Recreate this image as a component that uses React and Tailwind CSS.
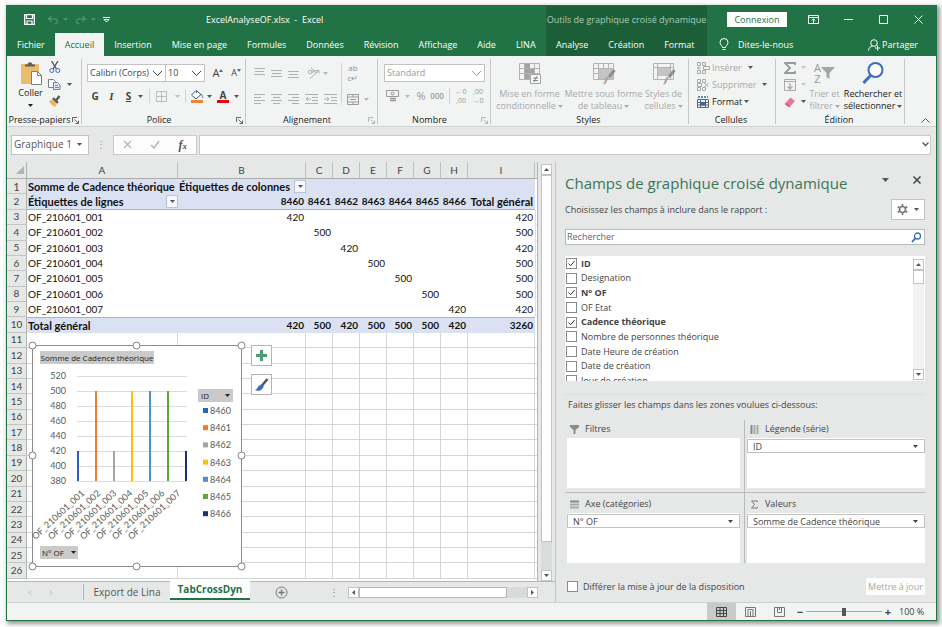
import React, { useState } from "react";

const ribbonTabs = [
  "Fichier",
  "Accueil",
  "Insertion",
  "Mise en page",
  "Formules",
  "Données",
  "Révision",
  "Affichage",
  "Aide",
  "LINA",
];
const contextTabs = ["Analyse", "Création", "Format"];

const columns = ["A", "B", "C", "D", "E", "F", "G", "H", "I"];
const ids = ["8460", "8461", "8462", "8463", "8464", "8465", "8466"];

const orders = [
  { name: "OF_210601_001", value: 420, color: "#2a5fc0" },
  { name: "OF_210601_002", value: 500, color: "#ed7d31" },
  { name: "OF_210601_003", value: 420, color: "#a5a5a5" },
  { name: "OF_210601_004", value: 500, color: "#ffc000" },
  { name: "OF_210601_005", value: 500, color: "#4a90d0" },
  { name: "OF_210601_006", value: 500, color: "#5fa832" },
  { name: "OF_210601_007", value: 420, color: "#1b2f73" },
];

const emptyRows = [11, 12, 13, 14, 15, 16, 17, 18, 19, 20, 21, 22, 23, 24, 25, 26];

const initialFields = [
  { label: "ID", checked: true },
  { label: "Designation", checked: false },
  { label: "N° OF", checked: true },
  { label: "OF Etat", checked: false },
  { label: "Cadence théorique", checked: true },
  { label: "Nombre de personnes théorique", checked: false },
  { label: "Date Heure de création", checked: false },
  { label: "Date de création", checked: false },
  { label: "Jour de création", checked: false },
];

/* ---------- small shared pieces ---------- */

const Caret = ({ className = "text-[#555]" }) => (
  <svg width="5" height="3" viewBox="0 0 5 3" className={`shrink-0 ${className}`} aria-hidden="true">
    <path d="M0 0h5L2.5 3z" fill="currentColor" />
  </svg>
);

const Icon = ({ w = 14, h = 14, className = "", children }) => (
  <svg
    width={w}
    height={h}
    viewBox={`0 0 ${w} ${h}`}
    fill="none"
    stroke="currentColor"
    className={`shrink-0 ${className}`}
    aria-hidden="true"
  >
    {children}
  </svg>
);

const IconButton = ({ label, className = "", children }) => (
  <button
    type="button"
    aria-label={label}
    className={`flex shrink-0 items-center justify-center ${className}`}
  >
    {children}
  </button>
);

const Select = ({ label, options, className = "", chevron = false }) => (
  <span className={`relative flex items-center border border-[#c3c3c3] bg-white ${className}`}>
    <select
      aria-label={label}
      className="h-full w-full appearance-none bg-transparent pl-[2px] outline-none"
    >
      {options.map((o) => (
        <option key={o}>{o}</option>
      ))}
    </select>
    <span className="pointer-events-none absolute right-[2px]">
      {chevron ? (
        <Icon w={11} h={7}>
          <path d="M1 1l4.5 4.5L10 1" />
        </Icon>
      ) : (
        <Caret className="mr-[4px]" />
      )}
    </span>
  </span>
);

const Tick = ({ checked, onChange, id }) => (
  <span className="relative flex h-[11px] w-[11px] shrink-0">
    <input
      id={id}
      type="checkbox"
      checked={checked}
      onChange={onChange}
      className="h-[11px] w-[11px] appearance-none border border-[#8a8a8a] bg-white"
    />
    {checked && (
      <Icon w={11} h={11} className="pointer-events-none absolute left-0 top-0 text-[#333]">
        <path d="M2.5 5.5l2.2 2.2L8.6 3" />
      </Icon>
    )}
  </span>
);

const Launcher = ({ muted }) => (
  <Icon w={7} h={7} className={muted ? "text-[#b5b5b5]" : "text-[#666]"}>
    <path d="M.5 5V.5H5M2.5 2.5l4 4M6.5 3.5v3h-3" />
  </Icon>
);

const Group = ({ title, launcher, muted, className, children }) => (
  <section className={`mb-[2px] mt-[3px] flex shrink-0 flex-col border-r border-[#c6c8c7] ${className}`}>
    <div className="flex min-h-0 flex-1">{children}</div>
    <div className={`flex h-2 items-center pr-[2px] ${launcher ? "" : "justify-center"}`}>
      <h2
        className={`whitespace-nowrap text-center text-[9px] leading-[8px] text-[#222] ${
          launcher ? "flex-1" : ""
        }`}
      >
        {title}
      </h2>
      {launcher && (
        <button type="button" aria-label={`Options ${title}`}>
          <Launcher muted={muted} />
        </button>
      )}
    </div>
  </section>
);

const Separator = ({ className = "h-[14px]" }) => (
  <span className={`w-px shrink-0 bg-[#d2d4d3] ${className}`} />
);

/* ---------- title bar and tabs ---------- */

const TabButton = ({ label, active, onClick }) => (
  <button
    type="button"
    onClick={onClick}
    className={`h-full whitespace-nowrap px-[10px] ${
      active ? "bg-[#f1f4f2] text-[#217346]" : "text-white"
    }`}
  >
    {label}
  </button>
);

const Header = () => {
  const [active, setActive] = useState("Accueil");

  return (
    <header className="flex h-[50px] shrink-0 bg-[#217346] text-[9px] text-white">
      <div className="flex min-w-0 flex-1 flex-col">
        <div className="flex h-[27px] items-center pl-4">
          <IconButton label="Enregistrer" className="w-3">
            <Icon w={11} h={11}>
              <path d="M.7.7h9.6v9.6H.7z" strokeWidth="1.3" />
              <path d="M2.5 1v3.5h6V1M3 10V7h5v3" strokeWidth="1.2" />
            </Icon>
          </IconButton>
          <IconButton label="Annuler" className="ml-3 gap-1 text-[#4f9270]">
            <Icon w={12} h={10}>
              <path d="M4.5 1L1.5 3.8l3 2.7M2 3.8h5.5c4 0 4 5 0 5" strokeWidth="1.3" />
            </Icon>
            <Caret className="text-[#4f9270]" />
          </IconButton>
          <IconButton label="Rétablir" className="ml-[7px] gap-1 text-[#4f9270]">
            <Icon w={12} h={10}>
              <path d="M7.5 1l3 2.8-3 2.7M10 3.8H4.5c-4 0-4 5 0 5" strokeWidth="1.3" />
            </Icon>
            <Caret className="text-[#4f9270]" />
          </IconButton>
          <IconButton label="Personnaliser la barre" className="ml-[7px]">
            <Icon w={7} h={6}>
              <path d="M0 .5h7M1 2.5h5L3.5 5z" />
            </Icon>
          </IconButton>
          <h1 className="min-w-0 flex-1 whitespace-pre pl-24">
            ExcelAnalyseOF.xlsx  -  Excel
          </h1>
        </div>
        <nav className="flex h-[23px] font-medium">
          {ribbonTabs.map((t) => (
            <TabButton key={t} label={t} active={t === active} onClick={() => setActive(t)} />
          ))}
        </nav>
      </div>

      <div className="flex w-[161px] shrink-0 flex-col bg-[#1b5e38]">
        <p className="flex h-[27px] items-center justify-center whitespace-nowrap text-[#a9cdb9]">
          Outils de graphique croisé dynamique
        </p>
        <nav className="flex h-[23px] font-medium">
          {contextTabs.map((t) => (
            <TabButton key={t} label={t} active={t === active} onClick={() => setActive(t)} />
          ))}
        </nav>
      </div>

      <div className="flex w-[229px] shrink-0 flex-col">
        <div className="flex h-[27px] items-center">
          <button type="button" className="ml-5 h-[15px] w-[60px] bg-white leading-[15px] text-[#217346]">
            Connexion
          </button>
          <IconButton label="Options du ruban" className="ml-5 w-3">
            <Icon w={11} h={9}>
              <path d="M.5.5h10v8H.5zM.5 2.5h10M5.5 8V4M3.8 5.5l1.7-1.7 1.7 1.7" />
            </Icon>
          </IconButton>
          <IconButton label="Réduire" className="ml-[23px] w-3">
            <Icon w={9} h={9}>
              <path d="M0 4.5h9" />
            </Icon>
          </IconButton>
          <IconButton label="Agrandir" className="ml-[23px] w-3">
            <Icon w={9} h={9}>
              <path d="M.5.5h8v8h-8z" />
            </Icon>
          </IconButton>
          <IconButton label="Fermer" className="ml-[23px] w-3">
            <Icon w={9} h={9}>
              <path d="M.5.5l8 8M8.5.5l-8 8" />
            </Icon>
          </IconButton>
        </div>
        <div className="flex h-[23px] items-center font-medium">
          <button type="button" className="ml-3 flex items-center gap-[9px] whitespace-nowrap">
            <Icon w={10} h={13}>
              <path d="M3.5 9.5C3.5 8 1 7 1 4.5a4 4 0 018 0C9 7 6.5 8 6.5 9.5zM3.5 11.5h3" />
            </Icon>
            Dites-le-nous
          </button>
          <button type="button" className="ml-auto mr-[18px] flex items-center gap-[2px] whitespace-nowrap">
            <Icon w={12} h={12}>
              <circle cx="6" cy="4" r="3.3" />
              <path d="M.5 11.5c.5-3 2-4 4-4.5M9.500 6.500v5M7 9h5" />
            </Icon>
            Partager
          </button>
        </div>
      </div>
    </header>
  );
};

/* ---------- ribbon ---------- */

const Lines = ({ rows }) => (
  <Icon w={11} h={10}>
    {rows.map(([x, y, w]) => (
      <path key={y} d={`M${x} ${y}.5h${w}`} />
    ))}
  </Icon>
);

const TableGlyph = ({ children }) => (
  <Icon w={24} h={24} className="text-[#b3b3b3]">
    <path d="M1.5 2.5h20v16h-20zM1.5 7.5h20M1.5 12.5h20M6.5 2.5v16M11.5 2.5v16M16.5 2.5v16" />
    {children}
  </Icon>
);

const BigButton = ({ icon, lines, muted, className }) => (
  <button
    type="button"
    className={`flex shrink-0 flex-col items-center pt-[2px] leading-[12px] ${
      muted ? "text-[#a9a9a9]" : "text-[#222]"
    } ${className}`}
  >
    {icon}
    <span className="mt-[3px] whitespace-nowrap">{lines[0]}</span>
    <span className="flex items-center gap-[2px] whitespace-nowrap">
      {lines[1]}
      <Caret className={muted ? "text-[#a9a9a9]" : "text-[#555]"} />
    </span>
  </button>
);

const CellCommand = ({ icon, label, muted }) => (
  <button
    type="button"
    className={`flex h-[17px] items-center gap-[2px] whitespace-nowrap ${
      muted ? "text-[#a9a9a9]" : "text-[#222]"
    }`}
  >
    {icon}
    {label}
    <Caret className={muted ? "ml-1 text-[#555]" : "text-[#555]"} />
  </button>
);

const Brush = ({ x = 12, y = 9 }) => (
  <g transform={`translate(${x} ${y})`}>
    <path d="M10.5 0L5 7" stroke="#8f8f8f" strokeWidth="3" />
    <path d="M5.5 6L2 13c-1 2-3 1-3 1 2-1 1-5 4-7z" fill="#a8a8a8" stroke="none" />
  </g>
);

const Ribbon = () => (
  <div className="flex h-[71px] shrink-0 border-b border-[#cfd1d0] bg-[#f1f4f2] text-[9px] text-[#444]">
    <Group title="Presse-papiers" launcher className="w-[75px]">
      <button type="button" className="ml-2 flex w-[31px] flex-col items-center pt-[2px] text-[#222]">
        <Icon w={24} h={25}>
          <path d="M2 3h18v20H2z" fill="#e9bd6b" stroke="none" />
          <path d="M6 5.5V3.5h2.500C9 .5 13 .5 13.5 3.500H16v2z" fill="#5d5d5d" stroke="none" />
          <path d="M12.5 10.5h6l4 4v9h-10z" fill="#fff" stroke="#7c7c7c" />
          <path d="M18.5 10.5v4h4" stroke="#7c7c7c" />
        </Icon>
        <span className="leading-[14px]">Coller</span>
        <Caret className="mt-1" />
      </button>
      <div className="ml-[2px] flex flex-col gap-1 pt-[2px]">
        <IconButton label="Couper" className="w-[13px]">
          <Icon w={12} h={13}>
            <path d="M2.5 0l5 8M9 0L4 8" stroke="#555" strokeWidth="1.4" />
            <circle cx="2.8" cy="9.5" r="2" stroke="#3d6fc0" />
            <circle cx="8.8" cy="9.5" r="2" stroke="#3d6fc0" />
          </Icon>
        </IconButton>
        <IconButton label="Copier" className="gap-[6px]">
          <Icon w={13} h={13}>
            <path d="M.5 1.5h5l2 2v6h-7z" fill="#fff" stroke="#7a7f8c" />
            <path d="M5.5 4.5h4l2.500 2.500v4.500H5.500z" fill="#dfe6f5" stroke="#7a7f8c" />
            <path d="M7 7.5h3M7 9.5h4" stroke="#6c8ccc" />
          </Icon>
          <Caret />
        </IconButton>
        <IconButton label="Reproduire la mise en forme" className="w-[13px]">
          <Icon w={13} h={12}>
            <path d="M1 6l4-2 4 5-2 3C5 11 2 9 1 6z" fill="#e9b768" stroke="none" />
            <path d="M5 3l5 5M8 5.5L11.5 1" stroke="#5a5a5a" strokeWidth="2.4" />
          </Icon>
        </IconButton>
      </div>
    </Group>

    <Group title="Police" launcher className="w-[164px]">
      <div className="w-full pl-[5px] pt-[5px]">
        <div className="flex items-center">
          <Select
            label="Police"
            options={["Calibri (Corps)"]}
            chevron
            className="h-[18px] w-[79px]"
          />
          <Select
            label="Taille"
            options={["10", "11", "12"]}
            chevron
            className="h-[18px] w-[39px] border-l-0"
          />
          <IconButton label="Agrandir la police" className="ml-1 w-[18px] text-[11px]">
            A
            <Icon w={4} h={8}>
              <path d="M0 3l2-3 2 3z" fill="#3d6fc0" stroke="none" />
            </Icon>
          </IconButton>
          <IconButton label="Réduire la police" className="w-[18px]">
            A
            <Icon w={4} h={8}>
              <path d="M0 0h4L2 3z" fill="#3d6fc0" stroke="none" />
            </Icon>
          </IconButton>
        </div>
        <div className="mt-1 flex h-[20px] items-center text-[10px]">
          <button type="button" className="w-[16px] font-bold">G</button>
          <button type="button" className="w-[17px] font-['Liberation_Serif',serif] text-[11px] font-bold italic">I</button>
          <button type="button" className="w-[17px] font-bold underline">S</button>
          <Caret className="ml-[1px] text-[#555]" />
          <Separator className="ml-[6px] h-[14px]" />
          <IconButton label="Bordures" className="ml-[6px] gap-2 text-[#bdbdbd]">
            <Icon w={11} h={11}>
              <path d="M.5.5h10v10H.5zM5.5.5v10M.5 5.5h10" />
            </Icon>
            <Caret className="text-[#bdbdbd]" />
          </IconButton>
          <Separator className="ml-[5px] h-[14px]" />
          <IconButton label="Couleur de remplissage" className="ml-[4px] gap-[3px]">
            <Icon w={14} h={13}>
              <path d="M6 .5L1.5 5 6 9l5-4.500z" fill="#fff" stroke="#555" />
              <path d="M6.5 3V0M11 4c2 2 2 4 1 4" stroke="#3d6fc0" />
              <path d="M1 10h12v3H1z" fill="#e8833a" stroke="none" />
            </Icon>
            <Caret />
          </IconButton>
          <IconButton label="Couleur de police" className="ml-[5px] gap-[5px]">
            <span className="flex w-3 flex-col items-center border-b-[3px] border-[#e8000f] font-bold leading-[10px]">
              A
            </span>
            <Caret />
          </IconButton>
        </div>
      </div>
    </Group>

    <Group title="Alignement" launcher muted className="w-[132px] text-[#b0b0b0]">
      <div className="flex flex-col gap-[6px] pl-2 pt-1">
        <div className="flex h-[20px] items-center gap-[6px]">
          <IconButton label="Aligner en haut">
            <Lines rows={[[0, 0, 11], [1, 3, 9], [0, 6, 11]]} />
          </IconButton>
          <IconButton label="Aligner au centre">
            <Lines rows={[[0, 2, 11], [1, 5, 9], [0, 8, 11]]} />
          </IconButton>
          <IconButton label="Aligner en bas">
            <Lines rows={[[0, 3, 11], [1, 6, 9], [0, 9, 11]]} />
          </IconButton>
          <IconButton label="Orientation" className="ml-[2px] gap-[3px]">
            <Icon w={13} h={12}>
              <circle cx="3" cy="5" r="1.8" />
              <path d="M4.5 3.5L6 6M4 .5l4 5M6.5 5c1-3 4-1 2 1M3 11.5L12 3.5M9 3.5h3v3" />
            </Icon>
            <Caret className="text-[#b8b8b8]" />
          </IconButton>
        </div>
        <div className="flex h-[20px] items-center gap-[6px]">
          <IconButton label="Aligner à gauche">
            <Lines rows={[[0, 0, 11], [0, 3, 7], [0, 6, 11], [0, 9, 7]]} />
          </IconButton>
          <IconButton label="Centrer">
            <Lines rows={[[0, 0, 11], [2, 3, 7], [0, 6, 11], [2, 9, 7]]} />
          </IconButton>
          <IconButton label="Aligner à droite">
            <Lines rows={[[0, 0, 11], [4, 3, 7], [0, 6, 11], [4, 9, 7]]} />
          </IconButton>
          <IconButton label="Diminuer le retrait">
            <Icon w={13} h={11}>
              <path d="M0 .5h13M7 3.5h6M7 6.5h6M0 9.5h13M6 5H1M3 3L1 5l2 2" />
            </Icon>
          </IconButton>
          <IconButton label="Augmenter le retrait">
            <Icon w={13} h={11}>
              <path d="M0 .5h13M7 3.5h6M7 6.5h6M0 9.5h13M0 5h5M3 3l2 2-2 2" />
            </Icon>
          </IconButton>
        </div>
      </div>
      <Separator className="ml-[4px] mt-1 h-[42px]" />
      <div className="flex flex-col gap-[6px] pl-[5px] pt-1">
        <IconButton label="Renvoyer à la ligne" className="h-[20px] w-3 flex-col text-[8px] leading-[10px] text-[#8f8f8f]">
          <span>ab</span>
          <span>c↵</span>
        </IconButton>
        <IconButton label="Fusionner et centrer" className="h-[20px] gap-[5px] text-[#9d9d9d]">
          <Icon w={12} h={11}>
            <path d="M.5.5h11v10H.5zM.5 3h11M.5 8h11M6 .5V3M6 8v2.500M3 5.500h6" />
          </Icon>
          <Caret className="text-[#b8b8b8]" />
        </IconButton>
      </div>
    </Group>

    <Group title="Nombre" launcher muted className="w-[113px] text-[#9a9a9a]">
      <div className="pl-[6px] pt-[5px]">
        <Select label="Format de nombre" options={["Standard"]} chevron className="h-[18px] w-[101px]" />
        <div className="mt-1 flex h-[20px] items-center">
          <IconButton label="Format comptable" className="ml-[2px] gap-[5px]">
            <Icon w={14} h={12}>
              <path d="M.5.5h12v6H.5z" />
              <circle cx="6.5" cy="3.5" r="1.5" />
              <path d="M4 8.5h6M4 10.5h6" strokeWidth="1.5" />
            </Icon>
            <Caret className="text-[#b8b8b8]" />
          </IconButton>
          <button type="button" className="ml-[5px] w-[12px] text-[11px]">%</button>
          <button type="button" className="ml-[2px] w-[16px] text-[8px] font-semibold">000</button>
          <Separator className="ml-[4px] h-[16px]" />
          <IconButton label="Ajouter une décimale" className="ml-[5px] w-3 flex-col text-[7px] leading-[9px]">
            <span>←0</span>
            <span>,00</span>
          </IconButton>
          <IconButton label="Réduire les décimales" className="ml-[5px] w-3 flex-col text-[7px] leading-[9px]">
            <span>,00</span>
            <span>→0</span>
          </IconButton>
        </div>
      </div>
    </Group>

    <Group title="Styles" className="w-[198px]">
      <BigButton
        muted
        className="ml-1 w-[69px]"
        lines={["Mise en forme", "conditionnelle"]}
        icon={
          <TableGlyph>
            <path d="M7 3h5v4H7zM7 8h9v4H7zM7 13h4v5H7z" fill="#a2a2a2" stroke="none" />
            <path d="M12.5 13.5h10v9h-10z" fill="#f7f7f7" stroke="#a2a2a2" />
            <path d="M15 17h5M15 19.5h5M19 15l-3 6" stroke="#888" />
          </TableGlyph>
        }
      />
      <BigButton
        muted
        className="w-[79px]"
        lines={["Mettre sous forme", "de tableau"]}
        icon={
          <TableGlyph>
            <path d="M7 8h14v10H7z" fill="#c4c4c4" stroke="none" />
            <Brush />
          </TableGlyph>
        }
      />
      <BigButton
        muted
        className="w-[41px]"
        lines={["Styles de", "cellules"]}
        icon={
          <Icon w={24} h={24} className="text-[#b3b3b3]">
            <path d="M1.5 2.5h20v16h-20zM1.5 6.5h20M5.5 2.5v16M18.5 2.5v16" />
            <path d="M6 7h12v8H6z" fill="#c4c4c4" stroke="none" />
            <Brush />
          </Icon>
        }
      />
    </Group>

    <Group title="Cellules" className="w-[87px]">
      <div className="pl-2">
        <CellCommand
          muted
          label="Insérer"
          icon={
            <Icon w={13} h={12}>
              <path d="M.5.5h3v3h-3zM5.5.5h3v3h-3zM.5 8.5h3v3h-3zM5.5 8.5h3v3h-3zM6.5 4.5h6v3h-6zM4 6H0M2 4.5L.5 6 2 7.5" />
            </Icon>
          }
        />
        <CellCommand
          muted
          label="Supprimer"
          icon={
            <Icon w={13} h={12}>
              <path d="M.5.5h3v3h-3zM5.5.5h3v3h-3zM.5 8.5h3v3h-3zM5.5 8.5h3v3h-3zM.5 4.5h4v3h-4zM7.5 4l4 4M11.5 4l-4 4" />
            </Icon>
          }
        />
        <CellCommand
          label="Format"
          icon={
            <Icon w={13} h={12} className="text-[#666]">
              <path d="M.5 3.5h11v8H.5zM.5 6.5h11M.5 9h11M3.5 3.5v8M8.5 3.5v8" />
              <path d="M4 6.5h4V9H4z" fill="#2f63b5" stroke="#2f63b5" />
              <path d="M1 1h10" stroke="#2f63b5" strokeWidth="1.5" strokeDasharray="2 1" />
            </Icon>
          }
        />
      </div>
    </Group>

    <Group title="Édition" className="w-[129px]">
      <div className="flex w-[30px] flex-col pl-2">
        <IconButton label="Somme" className="h-[17px] justify-start gap-[5px] text-[#999]">
          <Icon w={12} h={12}>
            <path d="M11 3V1H1l5 5-5 5h10V9" strokeWidth="1.8" />
          </Icon>
          <Caret className="text-[#c4c4c4]" />
        </IconButton>
        <IconButton label="Remplissage" className="h-[17px] justify-start gap-[5px] text-[#aaa]">
          <Icon w={12} h={12}>
            <path d="M.5.5h11v11H.5zM.5 2.5h11" />
            <path d="M6 4v6M3.5 7.5L6 10l2.500-2.500" strokeWidth="1.4" />
          </Icon>
          <Caret className="text-[#c4c4c4]" />
        </IconButton>
        <IconButton label="Effacer" className="h-[17px] justify-start gap-[5px]">
          <Icon w={12} h={12}>
            <path d="M6.5 1.5L11 5 6 10.5 1.5 7z" fill="#e5799b" stroke="none" />
            <path d="M1.2 7.3l4.5 3.5" stroke="#d44c78" strokeWidth="1.5" />
          </Icon>
          <Caret />
        </IconButton>
      </div>
      <BigButton
        muted
        className="w-[37px]"
        lines={["Trier et", "filtrer"]}
        icon={
          <span className="flex h-6 items-center text-[11px] leading-[11px] text-[#999]">
            <span className="flex flex-col">
              <span>A</span>
              <span>Z</span>
            </span>
            <Icon w={14} h={13}>
              <path d="M0 0h14L8.500 6v6l-3-2V6z" fill="#a5a5a5" stroke="none" />
            </Icon>
          </span>
        }
      />
      <BigButton
        className="w-[60px]"
        lines={["Rechercher et", "sélectionner"]}
        icon={
          <Icon w={24} h={24}>
            <circle cx="14.5" cy="9" r="7" fill="#fff" stroke="#3a6dbd" strokeWidth="2" />
            <path d="M9.5 14.5L2.5 22" stroke="#3a6dbd" strokeWidth="3" />
          </Icon>
        }
      />
    </Group>
    <IconButton label="Réduire le ruban" className="ml-auto mr-[6px] self-end pb-[3px]">
      <Icon w={9} h={5} className="text-[#555]">
        <path d="M.5 4.5l4-4 4 4" />
      </Icon>
    </IconButton>
  </div>
);

/* ---------- formula bar ---------- */

const FormulaBar = () => (
  <div className="flex h-[35px] shrink-0 items-center pl-[4px] pr-[5px] text-[10px] text-[#555]">
    <Select label="Zone Nom" options={["Graphique 1"]} className="h-[20px] w-[78px]" />
    <span className="w-6 text-center text-[#999]">⋮</span>
    <div className="flex h-[20px] w-[84px] shrink-0 items-center justify-around border border-[#c9cbca] bg-[#fbfcfb] text-[#b5b5b5]">
      <IconButton label="Annuler">
        <Icon w={9} h={9}>
          <path d="M1 1l7 7M8 1L1 8" strokeWidth="1.3" />
        </Icon>
      </IconButton>
      <IconButton label="Entrer">
        <Icon w={10} h={9}>
          <path d="M1 5l3 3 5-7" strokeWidth="1.5" />
        </Icon>
      </IconButton>
      <button type="button" className="font-['Liberation_Serif',serif] text-[12px] font-bold italic text-[#555]">
        f<span className="text-[9px]">x</span>
      </button>
    </div>
    <div className="relative ml-[2px] flex h-[20px] min-w-0 flex-1 items-center border border-[#c9cbca] bg-white">
      <input aria-label="Barre de formule" className="h-full w-full bg-transparent px-1 outline-none" />
      <Icon w={7} h={5} className="pointer-events-none absolute right-[1px] text-[#555]">
        <path d="M.5.5l3 3 3-3" strokeWidth="1.3" />
      </Icon>
    </div>
  </div>
);

/* ---------- worksheet ---------- */

const FilterButton = ({ label }) => (
  <button
    type="button"
    aria-label={label}
    className="flex h-[13px] w-[12px] shrink-0 items-center justify-center border border-[#b9c2d3] bg-[#f6f8fb]"
  >
    <Caret />
  </button>
);

const RowHeader = ({ n }) => (
  <th
    scope="row"
    className="border-b border-r border-b-[#c3c5c4] border-r-[#b0b2b1] bg-[#e6e8e7] p-0 text-center font-normal text-[#444]"
  >
    {n}
  </th>
);

const num = "p-0 pr-[2px] text-right";

const Sheet = () => (
  <table className="h-[417px] w-full table-fixed border-separate border-spacing-0 whitespace-nowrap font-['Lato',sans-serif] text-[10px] leading-[13px] text-[#111]">
    <colgroup>
      <col className="w-5" />
      <col className="w-[151px]" />
      <col className="w-32" />
      {ids.slice(1).map((id) => (
        <col key={id} className="w-[27px]" />
      ))}
      <col className="w-[67px]" />
      <col />
    </colgroup>
    <thead>
      <tr className="h-[17px] bg-[#e6e8e7] text-[#444]">
        <th className="border-b border-r border-[#b0b2b1] p-0">
          <svg width="8" height="8" viewBox="0 0 8 8" className="ml-auto mr-[2px]" aria-hidden="true">
            <path d="M8 0v8H0z" fill="#b3b5b4" />
          </svg>
        </th>
        {columns.map((c) => (
          <th key={c} scope="col" className="border-b border-r border-b-[#a9abaa] border-r-[#bfc1c0] p-0 font-normal">
            {c}
          </th>
        ))}
        <th className="border-b border-b-[#a9abaa]" />
      </tr>
    </thead>
    <tbody>
      <tr className="bg-[#d9e1f2] text-[11px] font-bold">
        <RowHeader n={1} />
        <td className="p-0 pl-[1px]">Somme de Cadence théorique</td>
        <td className="p-0 pl-[1px]">
          <div className="flex items-center justify-between">
            Étiquettes de colonnes
            <FilterButton label="Filtrer les colonnes" />
          </div>
        </td>
        <td colSpan={7} className="p-0" />
        <td className="bg-white p-0" />
      </tr>
      <tr className="bg-[#d9e1f2] font-bold">
        <RowHeader n={2} />
        <td className="border-b border-[#9fb3dd] p-0 pl-[1px] text-[11px]">
          <div className="flex items-center justify-between">
            Étiquettes de lignes
            <FilterButton label="Filtrer les lignes" />
          </div>
        </td>
        {ids.map((id) => (
          <td key={id} className={`border-b border-[#9fb3dd] ${num}`}>
            {id}
          </td>
        ))}
        <td className={`border-b border-[#9fb3dd] text-[11px] ${num}`}>Total général</td>
        <td className="bg-white p-0" />
      </tr>
      {orders.map((o, i) => (
        <tr key={o.name}>
          <RowHeader n={i + 3} />
          <td className="p-0 pl-[1px]">{o.name}</td>
          {ids.map((id, j) => (
            <td key={id} className={num}>
              {i === j ? o.value : ""}
            </td>
          ))}
          <td className={num}>{o.value}</td>
          <td className="border-b border-l border-[#dfe1e0] p-0" />
        </tr>
      ))}
      <tr className="bg-[#d9e1f2] font-bold">
        <RowHeader n={10} />
        <td className="border-t border-[#9fb3dd] p-0 pl-[1px] text-[11px]">Total général</td>
        {orders.map((o) => (
          <td key={o.name} className={`border-t border-[#9fb3dd] ${num}`}>
            {o.value}
          </td>
        ))}
        <td className={`border-t border-[#9fb3dd] ${num}`}>
          {orders.reduce((sum, o) => sum + o.value, 0)}
        </td>
        <td className="bg-white p-0" />
      </tr>
      {emptyRows.map((n) => (
        <tr key={n}>
          <RowHeader n={n} />
          {columns.map((c) => (
            <td key={c} className="border-b border-r border-[#d5d7d6] p-0" />
          ))}
          <td className="border-b border-[#d5d7d6] p-0" />
        </tr>
      ))}
    </tbody>
  </table>
);

const axis = [520, 500, 480, 460, 440, 420, 400, 380];
const yOf = (value) => 31 + ((520 - value) / 20) * 15;
const handles = [
  [0, 0], [104, 0], [209, 0],
  [0, 110], [209, 110],
  [0, 221], [104, 221], [209, 221],
];

const PivotChart = () => (
  <div className="absolute left-[25px] top-[183px] h-[222px] w-[210px] border border-[#8b8b8b] bg-white">
    <svg
      width="210"
      height="222"
      viewBox="0 0 210 222"
      className="absolute -left-px -top-px overflow-visible font-['Lato',sans-serif] text-[9px]"
      role="img"
      aria-label="Graphique croisé dynamique"
    >
      {axis.map((v) => (
        <g key={v}>
          <path d={`M45 ${yOf(v)}.5H155`} stroke="#dcdcdc" />
          <text x="34" y={yOf(v) + 3} textAnchor="end" fill="#595959">
            {v}
          </text>
        </g>
      ))}
      {orders.map((o, i) => (
        <g key={o.name}>
          <rect x={45 + i * 18} y={yOf(o.value)} width="2" height={yOf(380) - yOf(o.value)} fill={o.color} />
          <text
            textAnchor="end"
            fill="#595959"
            transform={`translate(${53 + i * 16} ${149}) rotate(-43)`}
          >
            {o.name}
          </text>
          <rect x="171" y={63 + i * 17.2} width="5" height="5" fill={o.color} />
          <text x="178" y={69 + i * 17.2} fill="#595959">
            {ids[i]}
          </text>
        </g>
      ))}
      {handles.map(([x, y]) => (
        <circle key={`${x}-${y}`} cx={x + 0.5} cy={y + 0.5} r="3.5" fill="#fff" stroke="#808080" />
      ))}
    </svg>
    <button
      type="button"
      className="absolute left-[7px] top-[5px] h-[13px] w-[114px] whitespace-nowrap bg-[#c9cac9] text-[8px] leading-[13px] text-[#222]"
    >
      Somme de Cadence théorique
    </button>
    <button
      type="button"
      className="absolute left-[165px] top-[43px] flex h-[13px] w-[35px] items-center justify-between bg-[#c9cac9] px-[3px] text-[8px] leading-[13px] text-[#222]"
    >
      ID <Caret className="text-[#222]" />
    </button>
    <button
      type="button"
      className="absolute left-[7px] top-[200px] flex h-[13px] w-[38px] items-center justify-between whitespace-nowrap bg-[#c9cac9] px-[2px] text-[8px] leading-[13px] text-[#222]"
    >
      N° OF <Caret className="text-[#222]" />
    </button>
    <div className="absolute left-[218px] top-[-1px] flex flex-col gap-2">
      <IconButton label="Éléments de graphique" className="h-[21px] w-[21px] border border-[#b5b5b5] bg-white">
        <Icon w={11} h={11}>
          <path d="M5.5 0v11M0 5.5h11" stroke="#4a9c74" strokeWidth="3" />
        </Icon>
      </IconButton>
      <IconButton label="Styles du graphique" className="h-[21px] w-[21px] border border-[#b5b5b5] bg-white">
        <Icon w={15} h={14}>
          <path d="M13.5 1L8 7.5" stroke="#555" strokeWidth="2.6" />
          <path d="M7 6.500c3 0 3 2 2 3.500-2 3-5 3.500-8.500 2C4 11.500 3 8 7 6.500z" fill="#3a6dbd" stroke="none" />
        </Icon>
      </IconButton>
    </div>
  </div>
);

const ScrollArrow = ({ label, d, className = "" }) => (
  <IconButton label={label} className={`h-[11px] w-[11px] border border-[#c2c4c3] bg-white ${className}`}>
    <svg width="5" height="5" viewBox="0 0 5 5" aria-hidden="true">
      <path d={d} fill="#555" />
    </svg>
  </IconButton>
);

const SheetTabs = () => (
  <div className="flex h-[21px] shrink-0 items-center border-t border-[#b5b7b6] text-[10px] text-[#555]">
    <IconButton label="Feuille précédente" className="ml-5 w-[6px]">
      <Icon w={4} h={5} className="text-[#b0b0b0]">
        <path d="M3 .5l-2 2 2 2" />
      </Icon>
    </IconButton>
    <IconButton label="Feuille suivante" className="ml-[15px] w-[6px]">
      <Icon w={4} h={5} className="text-[#b0b0b0]">
        <path d="M1 .5l2 2-2 2" />
      </Icon>
    </IconButton>
    <button type="button" className="ml-[29px] h-[16px] w-[87px] whitespace-nowrap border-l border-[#b5b7b6] leading-[16px]">
      Export de Lina
    </button>
    <button
      type="button"
      className="-mt-px h-[19px] w-[80px] self-start border-b-2 border-[#217346] bg-white font-bold text-[#217346]"
    >
      TabCrossDyn
    </button>
    <IconButton label="Nouvelle feuille" className="ml-6 w-[14px]">
      <Icon w={13} h={13} className="text-[#777]">
        <circle cx="6.5" cy="6.5" r="5.5" />
        <path d="M6.5 3.5v6M3.5 6.5h6" strokeWidth="1.4" />
      </Icon>
    </IconButton>
    <span className="ml-auto mr-[9px] text-[#888]">⋮</span>
    <div className="mr-[17px] flex w-[190px] bg-[#d9dbda]">
      <ScrollArrow label="Défiler à gauche" d="M4 0v5L1 2.5z" />
      <span className="h-[11px] w-[148px] border border-[#b5b7b6] bg-white" />
      <ScrollArrow label="Défiler à droite" d="M1 0v5l3-2.5z" className="ml-auto" />
    </div>
  </div>
);

const Workbook = () => (
  <main className="flex min-w-0 flex-1 flex-col">
    <div className="flex min-h-0 flex-1">
      <div className="relative min-w-0 flex-1 overflow-hidden border-r border-[#b5b7b6] bg-white">
        <Sheet />
        <PivotChart />
      </div>
      <div className="ml-[3px] mr-[3px] mt-[2px] flex w-[11px] flex-col bg-[#dadcdb]">
        <ScrollArrow label="Défiler vers le haut" d="M0 4h5L2.5 1z" />
        <span className="mb-7 flex-1 border border-[#c2c4c3] bg-white" />
        <ScrollArrow label="Défiler vers le bas" d="M0 1h5L2.5 4z" />
      </div>
    </div>
    <SheetTabs />
  </main>
);

/* ---------- field list pane ---------- */

const Zone = ({ icon, title, field }) => (
  <div className="flex min-w-0 flex-col">
    <h3 className="flex h-[18px] items-center gap-[6px] pl-[3px]">
      {icon}
      {title}
    </h3>
    <div className="h-[50px] bg-white pt-px">
      {field && <Select label={title} options={[field]} className="h-[14px] pl-[3px]" />}
    </div>
  </div>
);

const FieldPane = () => {
  const [fields, setFields] = useState(initialFields);
  const [deferred, setDeferred] = useState(false);

  const toggle = (label) => {
    setFields((prev) =>
      prev.map((f) => (f.label === label ? { ...f, checked: !f.checked } : f)),
    );
  };

  return (
    <aside className="flex w-[381px] shrink-0 flex-col border-l border-[#c3c5c4] pl-[9px] pr-[11px] text-[9px] text-[#444]">
      <div className="mt-[8px] flex h-[26px] items-center">
        <h2 className="flex-1 whitespace-nowrap text-[15px] leading-[24px] text-[#3b7556]">
          Champs de graphique croisé dynamique
        </h2>
        <IconButton label="Options du volet" className="mb-[6px] w-[10px]">
          <svg width="7" height="4" viewBox="0 0 7 4" aria-hidden="true">
            <path d="M0 0h7L3.5 4z" fill="#555" />
          </svg>
        </IconButton>
        <IconButton label="Fermer le volet" className="mb-[6px] ml-[22px] mr-[3px] w-[10px]">
          <Icon w={8} h={8}>
            <path d="M.5.5l7 7M7.5.5l-7 7" strokeWidth="1.5" />
          </Icon>
        </IconButton>
      </div>
      <div className="mt-[3px] flex h-[21px] items-center justify-between">
        <p>Choisissez les champs à inclure dans le rapport :</p>
        <IconButton label="Outils" className="h-[21px] w-[34px] gap-[6px] border border-[#c3c5c4] bg-white">
          <Icon w={11} h={11} className="text-[#777]">
            <circle cx="5.5" cy="5.5" r="3" strokeWidth="1.6" />
            <path d="M5.5 0v2M5.5 9v2M.7 2.7l1.8 1M8.5 7.3l1.8 1M.7 8.3l1.8-1M8.5 3.7l1.8-1" strokeWidth="1.6" />
          </Icon>
          <Caret />
        </IconButton>
      </div>
      <div className="mt-[9px] flex h-[16px] items-center border border-[#b9bbba] bg-white pl-[1px] pr-[2px]">
        <input
          type="search"
          aria-label="Rechercher un champ"
          placeholder="Rechercher"
          className="w-full bg-transparent outline-none placeholder:text-[#666]"
        />
        <Icon w={11} h={11} className="text-[#3a6dbd]">
          <circle cx="6.5" cy="4" r="3" strokeWidth="1.3" />
          <path d="M4.3 6.3L1 10" strokeWidth="1.8" />
        </Icon>
      </div>

      <div className="mt-[11px] flex h-[125px] overflow-hidden bg-white">
        <ul className="flex h-[132px] flex-1 flex-col pl-px">
          {fields.map((f, i) => (
            <li key={f.label} className="flex flex-1 items-center gap-1">
              <Tick id={`field-${i}`} checked={f.checked} onChange={() => toggle(f.label)} />
              <label htmlFor={`field-${i}`} className={f.checked ? "font-bold" : ""}>
                {f.label}
              </label>
            </li>
          ))}
        </ul>
        <div className="mb-[1px] mr-[1px] mt-[3px] flex w-[11px] flex-col bg-[#f1f2f1]">
          <ScrollArrow label="Monter" d="M0 4h5L2.5 1z" />
          <span className="h-[14px] border border-[#c2c4c3] bg-white" />
          <ScrollArrow label="Descendre" d="M0 1h5L2.5 4z" className="mt-auto" />
        </div>
      </div>

      <p className="mt-[13px] border-t border-[#dcdedd] pl-[3px] pt-[3px] leading-[13px]">
        Faites glisser les champs dans les zones voulues ci-dessous:
      </p>

      <div className="mt-[9px] grid grid-cols-2">
        <div className="border-b border-r border-[#b9bbba] pb-[4px] pl-[2px] pr-1">
          <Zone
            title="Filtres"
            icon={
              <Icon w={9} h={9}>
                <path d="M0 0h9v2L5.5 5v4h-2V5L0 2z" fill="#8b8b8b" stroke="none" />
              </Icon>
            }
          />
        </div>
        <div className="border-b border-[#b9bbba] pb-[4px] pl-[2px]">
          <Zone
            title="Légende (série)"
            field="ID"
            icon={
              <Icon w={9} h={9}>
                <path d="M1.5 0v9" stroke="#888" strokeWidth="2" />
                <path d="M4.5 0v9M7.5 0v9" stroke="#aaa" strokeWidth="2" />
              </Icon>
            }
          />
        </div>
        <div className="border-r border-[#b9bbba] pl-[2px] pr-1 pt-[2px]">
          <Zone
            title="Axe (catégories)"
            field="N° OF"
            icon={
              <Icon w={9} h={9}>
                <path d="M0 1.5h9" stroke="#888" strokeWidth="2" />
                <path d="M0 4.5h9M0 7.5h9" stroke="#aaa" strokeWidth="2" />
              </Icon>
            }
          />
        </div>
        <div className="pl-[2px] pt-[2px]">
          <Zone
            title="Valeurs"
            field="Somme de Cadence théorique"
            icon={
              <Icon w={9} h={9}>
                <path d="M7.5 2V1H1.5l3 3.5-3 3.5h6V7" stroke="#777" />
              </Icon>
            }
          />
        </div>
      </div>

      <div className="mt-[15px] flex h-[17px] items-center gap-[5px] pl-[2px]">
        <Tick id="defer" checked={deferred} onChange={() => setDeferred(!deferred)} />
        <label htmlFor="defer">Différer la mise à jour de la disposition</label>
        <button type="button" className="ml-auto h-[17px] w-[59px] whitespace-nowrap bg-[#fbfcfb] text-[#aaa]">
          Mettre à jour
        </button>
      </div>
    </aside>
  );
};

/* ---------- status bar ---------- */

const StatusBar = () => {
  const [zoom, setZoom] = useState(100);

  return (
    <footer className="flex h-[18px] shrink-0 items-center justify-end border-t border-[#cfd1d0] bg-[#f1f4f2] text-[9px] text-[#444]">
      <IconButton label="Normal" className="h-full w-[29px] bg-[#c9cbca]">
        <Icon w={11} h={10}>
          <path d="M.5.5h10v9H.5zM.5 3.5h10M.5 6.5h10M4 .5v9M7.5.5v9" />
        </Icon>
      </IconButton>
      <IconButton label="Mise en page" className="w-[29px]">
        <Icon w={11} h={10} className="text-[#777]">
          <path d="M.5.5h10v9H.5zM3 2.5h5v7M3 2.5v7M5.5 4v5" />
        </Icon>
      </IconButton>
      <IconButton label="Aperçu des sauts de page" className="w-[29px]">
        <Icon w={11} h={10} className="text-[#777]">
          <path d="M.5.5h10v9H.5zM3.5.5v5H7.5v-5M5.5.5V3" />
        </Icon>
      </IconButton>
      <button type="button" aria-label="Zoom arrière" className="w-3 text-[11px] font-bold leading-none">
        −
      </button>
      <input
        type="range"
        aria-label="Zoom"
        min="10"
        max="190"
        value={zoom}
        onChange={(e) => setZoom(Number(e.target.value))}
        className="h-px w-[76px] appearance-none bg-[#a5a7a6] [&::-webkit-slider-thumb]:h-2 [&::-webkit-slider-thumb]:w-1 [&::-webkit-slider-thumb]:appearance-none [&::-webkit-slider-thumb]:bg-[#555]"
      />
      <button type="button" aria-label="Zoom avant" className="w-3 text-[11px] font-bold leading-none">
        +
      </button>
      <span className="w-[42px] whitespace-nowrap pl-[5px]">{zoom} %</span>
    </footer>
  );
};

const App = () => (
  <div className="h-screen overflow-hidden bg-[#fbfcfb] pb-[6px] pl-[6px] pr-[5px] pt-[5px] font-['Open_Sans',sans-serif]">
    <div className="flex h-full flex-col border border-[#217346] bg-[#e6e8e7] shadow-[2px_2px_4px_1px_#9a9a9a]">
      <Header />
      <Ribbon />
      <FormulaBar />
      <div className="flex min-h-0 flex-1">
        <Workbook />
        <FieldPane />
      </div>
      <StatusBar />
    </div>
  </div>
);

export default App;
